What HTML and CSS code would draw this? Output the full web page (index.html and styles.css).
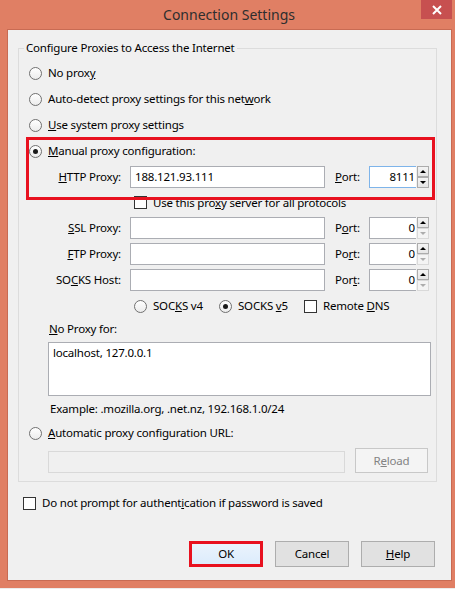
FILE: index.html
```html
<!DOCTYPE html>
<html>
<head>
<meta charset="utf-8">
<title>Connection Settings</title>
<link rel="stylesheet" href="styles.css">
</head>
<body>
<div class="window">
  <div class="titlebar">
    <span class="title">Connection Settings</span>
    <div class="close">
      <svg width="10" height="10" viewBox="0 0 10 10"><path d="M1 1 L9 9 M9 1 L1 9" stroke="#fff" stroke-width="2"/></svg>
    </div>
  </div>
  <div class="client">
    <fieldset class="group">
      <legend>Configure Proxies to Access the Internet</legend>
      <div class="row radio-row"><span class="radio"></span><span>No prox<u>y</u></span></div>
      <div class="row radio-row"><span class="radio"></span><span>Auto-detect proxy settings for this net<u>w</u>ork</span></div>
      <div class="row radio-row"><span class="radio"></span><span><u>U</u>se system proxy settings</span></div>
      <div class="row radio-row"><span class="radio on"></span><span><u>M</u>anual proxy configuration:</span></div>
      <div class="row field-row">
        <span class="flabel"><u>H</u>TTP Proxy:</span>
        <div class="input host">188.121.93.111</div>
        <span class="plabel"><u>P</u>ort:</span>
        <div class="input port focus">8111</div>
        <div class="spin"><span class="sb"><i class="up"></i></span><span class="sb"><i class="down"></i></span></div>
      </div>
      <div class="row check-row"><span class="check"></span><span>Use this pro<u>x</u>y server for all protocols</span></div>
      <div class="row field-row">
        <span class="flabel"><u>S</u>SL Proxy:</span>
        <div class="input host"></div>
        <span class="plabel">P<u>o</u>rt:</span>
        <div class="input port">0</div>
        <div class="spin"><span class="sb"><i class="up"></i></span><span class="sb off"><i class="down"></i></span></div>
      </div>
      <div class="row field-row">
        <span class="flabel"><u>F</u>TP Proxy:</span>
        <div class="input host"></div>
        <span class="plabel">Po<u>r</u>t:</span>
        <div class="input port">0</div>
        <div class="spin"><span class="sb"><i class="up"></i></span><span class="sb off"><i class="down"></i></span></div>
      </div>
      <div class="row field-row">
        <span class="flabel">SO<u>C</u>KS Host:</span>
        <div class="input host"></div>
        <span class="plabel">Por<u>t</u>:</span>
        <div class="input port">0</div>
        <div class="spin"><span class="sb"><i class="up"></i></span><span class="sb off"><i class="down"></i></span></div>
      </div>
      <div class="row socks-row">
        <div class="opt"><span class="radio"></span><span>SOC<u>K</u>S v4</span></div>
        <div class="opt"><span class="radio on"></span><span>SOCKS <u>v</u>5</span></div>
        <div class="opt"><span class="check"></span><span>Remote <u>D</u>NS</span></div>
      </div>
      <div class="row noproxy-label"><span><u>N</u>o Proxy for:</span></div>
      <div class="textarea">localhost, 127.0.0.1</div>
      <div class="row example"><span>Example: .mozilla.org, .net.nz, 192.168.1.0/24</span></div>
      <div class="row radio-row auto-row"><span class="radio"></span><span><u>A</u>utomatic proxy configuration URL:</span></div>
      <div class="url-row">
        <div class="input url"></div>
        <div class="btn disabled">R<u>e</u>load</div>
      </div>
    </fieldset>
    <div class="row check-row auth-row"><span class="check"></span><span>Do not prompt for authent<u>i</u>cation if password is saved</span></div>
    <div class="buttons">
      <div class="btn ok">OK</div>
      <div class="btn">Cancel</div>
      <div class="btn"><u>H</u>elp</div>
    </div>
    <div class="annot"></div>
  </div>
</div>
</body>
</html>
```
FILE: styles.css
```css
* { box-sizing: border-box; }
body {
  margin: 0;
  width: 455px;
  height: 589px;
  overflow: hidden;
  background: #ececec;
  font-family: "Segoe UI", "Noto Sans", sans-serif;
  font-size: 11.5px;
  letter-spacing: -0.2px;
  line-height: 16px;
  color: #000;
}
.window {
  position: relative;
  height: 588px;
  background: #e07f64;
}
.titlebar {
  height: 29px;
  display: flex;
  align-items: center;
  justify-content: center;
  padding-left: 3px;
}
.title {
  font-size: 14px;
  letter-spacing: 0;
  color: #2e2e2e;
}
.close {
  position: absolute;
  top: 0;
  right: 3px;
  width: 31px;
  height: 19px;
  background: #c75050;
  display: flex;
  align-items: center;
  justify-content: center;
}
.client {
  position: relative;
  margin-left: 7px;
  width: 445px;
  height: 552px;
  border: 1px solid #c86b53;
  background: #f0f0f0;
}
.group {
  margin: 10px 0 0 10px;
  width: 419px;
  min-width: 0;
  border: 1px solid #dcdcdc;
  padding: 4px 0 8px 0;
}
.group legend {
  margin-left: 5px;
  padding: 0 2px;
  line-height: 16px;
}
.row {
  display: flex;
  align-items: center;
  height: 26px;
  white-space: nowrap;
}
.radio-row { padding-left: 10px; gap: 6px; }
.radio {
  width: 13px;
  height: 13px;
  flex: none;
  border-radius: 50%;
  border: 1px solid #707070;
  background: linear-gradient(#ffffff, #ececec);
  display: flex;
  align-items: center;
  justify-content: center;
}
.radio.on::after {
  content: "";
  width: 5px;
  height: 5px;
  border-radius: 50%;
  background: #1a1a1a;
}
.check {
  width: 13px;
  height: 13px;
  flex: none;
  border: 1px solid #333;
  background: #fff;
}
.field-row { gap: 0; }
.flabel {
  width: 102px;
  text-align: right;
  flex: none;
}
.input {
  height: 22px;
  border: 1px solid #abadb3;
  background: #fff;
  flex: none;
  line-height: 20px;
  padding: 0 4px;
}
.host { width: 195px; margin-left: 9px; }
.plabel { width: 34px; margin-left: 10px; flex: none; }
.port {
  width: 47px;
  border-right: none;
  text-align: right;
  padding: 0 1px 0 0;
}
.port.focus { border-color: #7eb4ea; }
.spin {
  display: flex;
  flex-direction: column;
  margin-left: 1px;
  width: 12px;
  height: 22px;
}
.sb {
  height: 11px;
  border: 1px solid #acacac;
  background: linear-gradient(#f4f4f4, #e6e6e6);
  display: flex;
  align-items: center;
  justify-content: center;
}
.sb .up {
  width: 0; height: 0;
  border-left: 3px solid transparent;
  border-right: 3px solid transparent;
  border-bottom: 3px solid #000;
}
.sb .down {
  width: 0; height: 0;
  border-left: 3px solid transparent;
  border-right: 3px solid transparent;
  border-top: 3px solid #000;
}
.sb.off { border-color: #d9d9d9; background: #f4f4f4; }
.sb.off .down { border-top-color: #adadad; }
.check-row { padding-left: 115px; gap: 6px; height: 25px; }
.socks-row { padding-left: 115px; }
.opt {
  width: 85px;
  display: flex;
  align-items: center;
  gap: 6px;
  flex: none;
}
.noproxy-label { height: 20px; padding-left: 30px; }
.textarea {
  margin: 3px 0 0 29px;
  width: 383px;
  height: 54px;
  border: 1px solid #abadb3;
  background: #fff;
  padding: 2px 4px;
}
.example { padding-left: 31px; }
.auto-row { height: 22px; }
.url-row {
  display: flex;
  align-items: flex-start;
  height: 29px;
  padding: 4px 0 0 29px;
}
.url {
  width: 297px;
  margin-top: 3px;
  background: #f0f0f0;
  border-color: #d9d9d9;
}
.btn {
  height: 26px;
  width: 74px;
  flex: none;
  border: 1px solid #adadad;
  background: #e1e1e1;
  display: flex;
  align-items: center;
  justify-content: center;
}
.btn.disabled {
  margin-left: 10px;
  width: 73px;
  height: 25px;
  color: #838383;
  border-color: #c8c8c8;
  background: #f4f4f4;
}
.auth-row { margin-top: 8px; padding-left: 15px; height: 26px; }
.buttons {
  display: flex;
  justify-content: flex-end;
  gap: 12px;
  margin-top: 25px;
  padding-right: 16px;
}
.btn.ok {
  background: linear-gradient(#eaf3fc, #dcecfc);
  border: 3px solid #e8111f;
}
.annot {
  position: absolute;
  left: 18px;
  top: 107px;
  width: 409px;
  height: 63px;
  border: 3px solid #e8111f;
}
```
